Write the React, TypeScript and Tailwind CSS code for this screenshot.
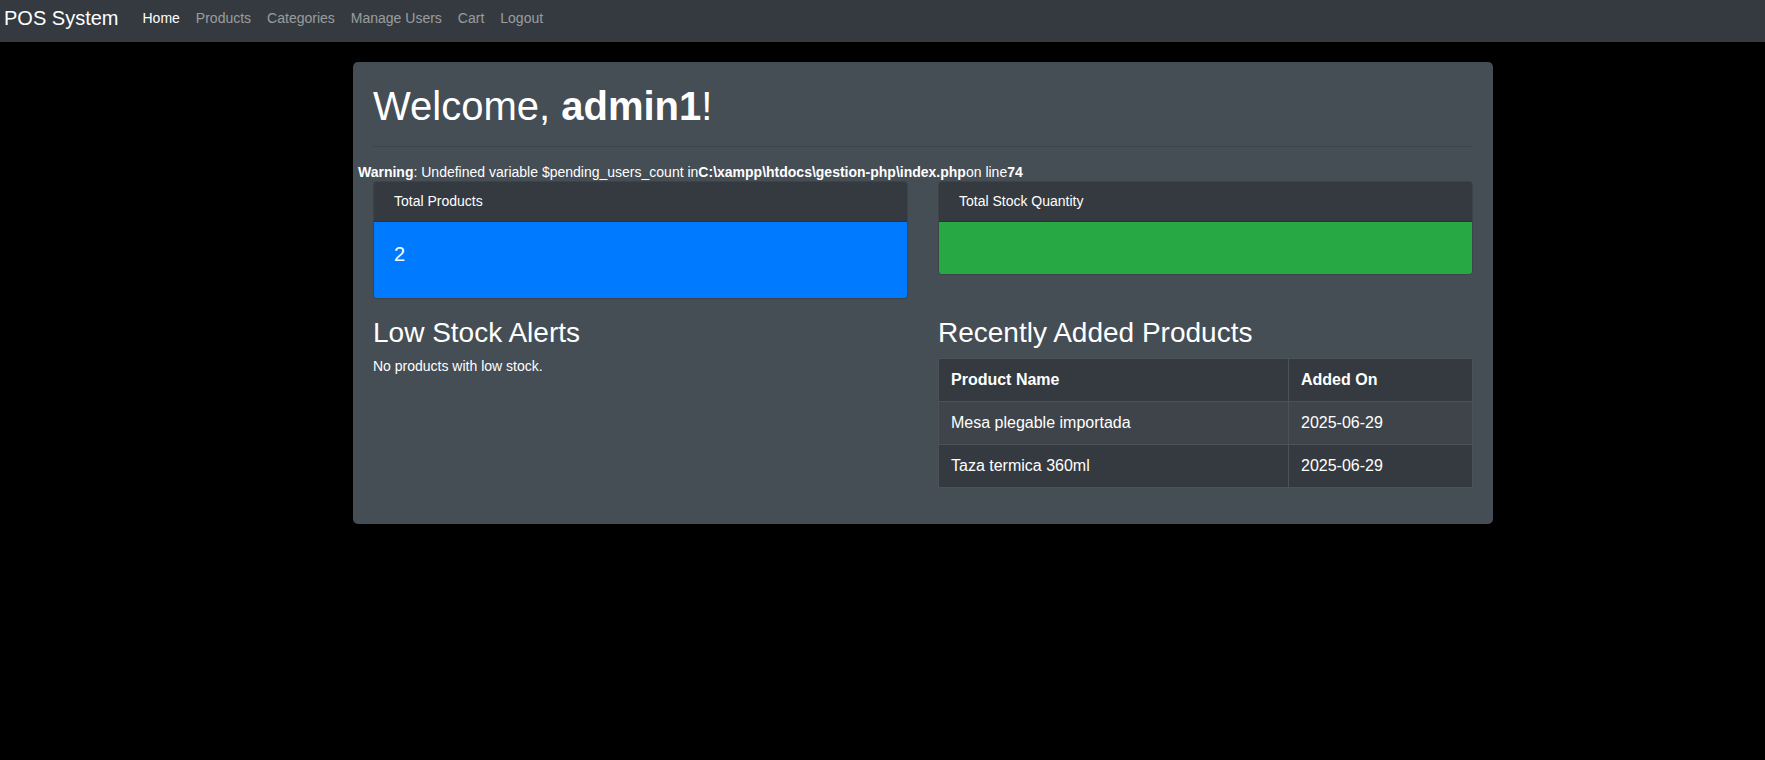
const links = ["Home", "Products", "Categories", "Manage Users", "Cart", "Logout"]

const recent = [
  { name: "Mesa plegable importada", added: "2025-06-29" },
  { name: "Taza termica 360ml", added: "2025-06-29" },
]

function StatCard({ title, value, tone }: { title: string; value?: string; tone: string }) {
  return (
    <div className="overflow-hidden rounded-[4px] border border-black/[.125]">
      <div className="border-b border-black/[.125] bg-[#343a40] px-5 py-3 text-[14px] leading-[15px]">{title}</div>
      <div className={"px-5 pt-5 pb-8 " + tone}>
        {value && <h5 className="text-[20px] leading-[24px]">{value}</h5>}
      </div>
    </div>
  )
}

export default function App() {
  return (
    <div className="min-h-[760px] bg-black font-['Liberation_Sans',Arial,sans-serif] text-white">
      <nav className="flex h-[42px] items-center bg-[#343a40] pb-[6px] pl-1">
        <span className="mr-4 text-[20px] leading-[23px]">POS System</span>
        <ul className="flex text-[14px] leading-[16px]">
          {links.map((l, i) => (
            <li key={l} className={"px-2 " + (i === 0 ? "text-white" : "text-white/50")}>
              {l}
            </li>
          ))}
        </ul>
      </nav>

      <main className="ml-[353px] w-[1140px] pt-5">
        <div className="rounded-[5px] bg-[#454d55] p-5">
          <h1 className="text-[40px] leading-[1.2]">
            Welcome, <b>admin1</b>!
          </h1>
          <hr className="my-4 border-t border-[#3c434a]" />

          <div className="-mx-[15px] h-[18px] text-[14px] leading-[18px]">
            <b>Warning</b>: Undefined variable $pending_users_count in
            <b>{"C:\\xampp\\htdocs\\gestion-php\\index.php"}</b>on line<b>74</b>
          </div>

          <div className="mb-[17px] grid grid-cols-2 items-start gap-[30px]">
            <StatCard title="Total Products" value="2" tone="bg-[#007bff]" />
            <StatCard title="Total Stock Quantity" tone="bg-[#28a745]" />
          </div>

          <div className="grid grid-cols-2 items-start gap-[30px]">
            <div>
              <h3 className="mb-2 text-[28px] leading-[1.2]">Low Stock Alerts</h3>
              <p className="text-[14px] leading-[16px]">No products with low stock.</p>
            </div>
            <div>
              <h3 className="mb-2 text-[28px] leading-[1.2]">Recently Added Products</h3>
              <table className="mb-4 w-full border-collapse border border-[#4b5259] text-[16px] leading-[18px]">
                <thead>
                  <tr className="bg-[#343a40]">
                    <th className="w-[350px] border border-[#4b5259] p-3 text-left font-bold">Product Name</th>
                    <th className="border border-[#4b5259] p-3 text-left font-bold">Added On</th>
                  </tr>
                </thead>
                <tbody>
                  {recent.map((r, i) => (
                    <tr key={r.name} className={i % 2 === 0 ? "bg-[#3e444a]" : "bg-[#343a40]"}>
                      <td className="border border-[#4b5259] p-3">{r.name}</td>
                      <td className="border border-[#4b5259] p-3">{r.added}</td>
                    </tr>
                  ))}
                </tbody>
              </table>
            </div>
          </div>
        </div>
      </main>
    </div>
  )
}
